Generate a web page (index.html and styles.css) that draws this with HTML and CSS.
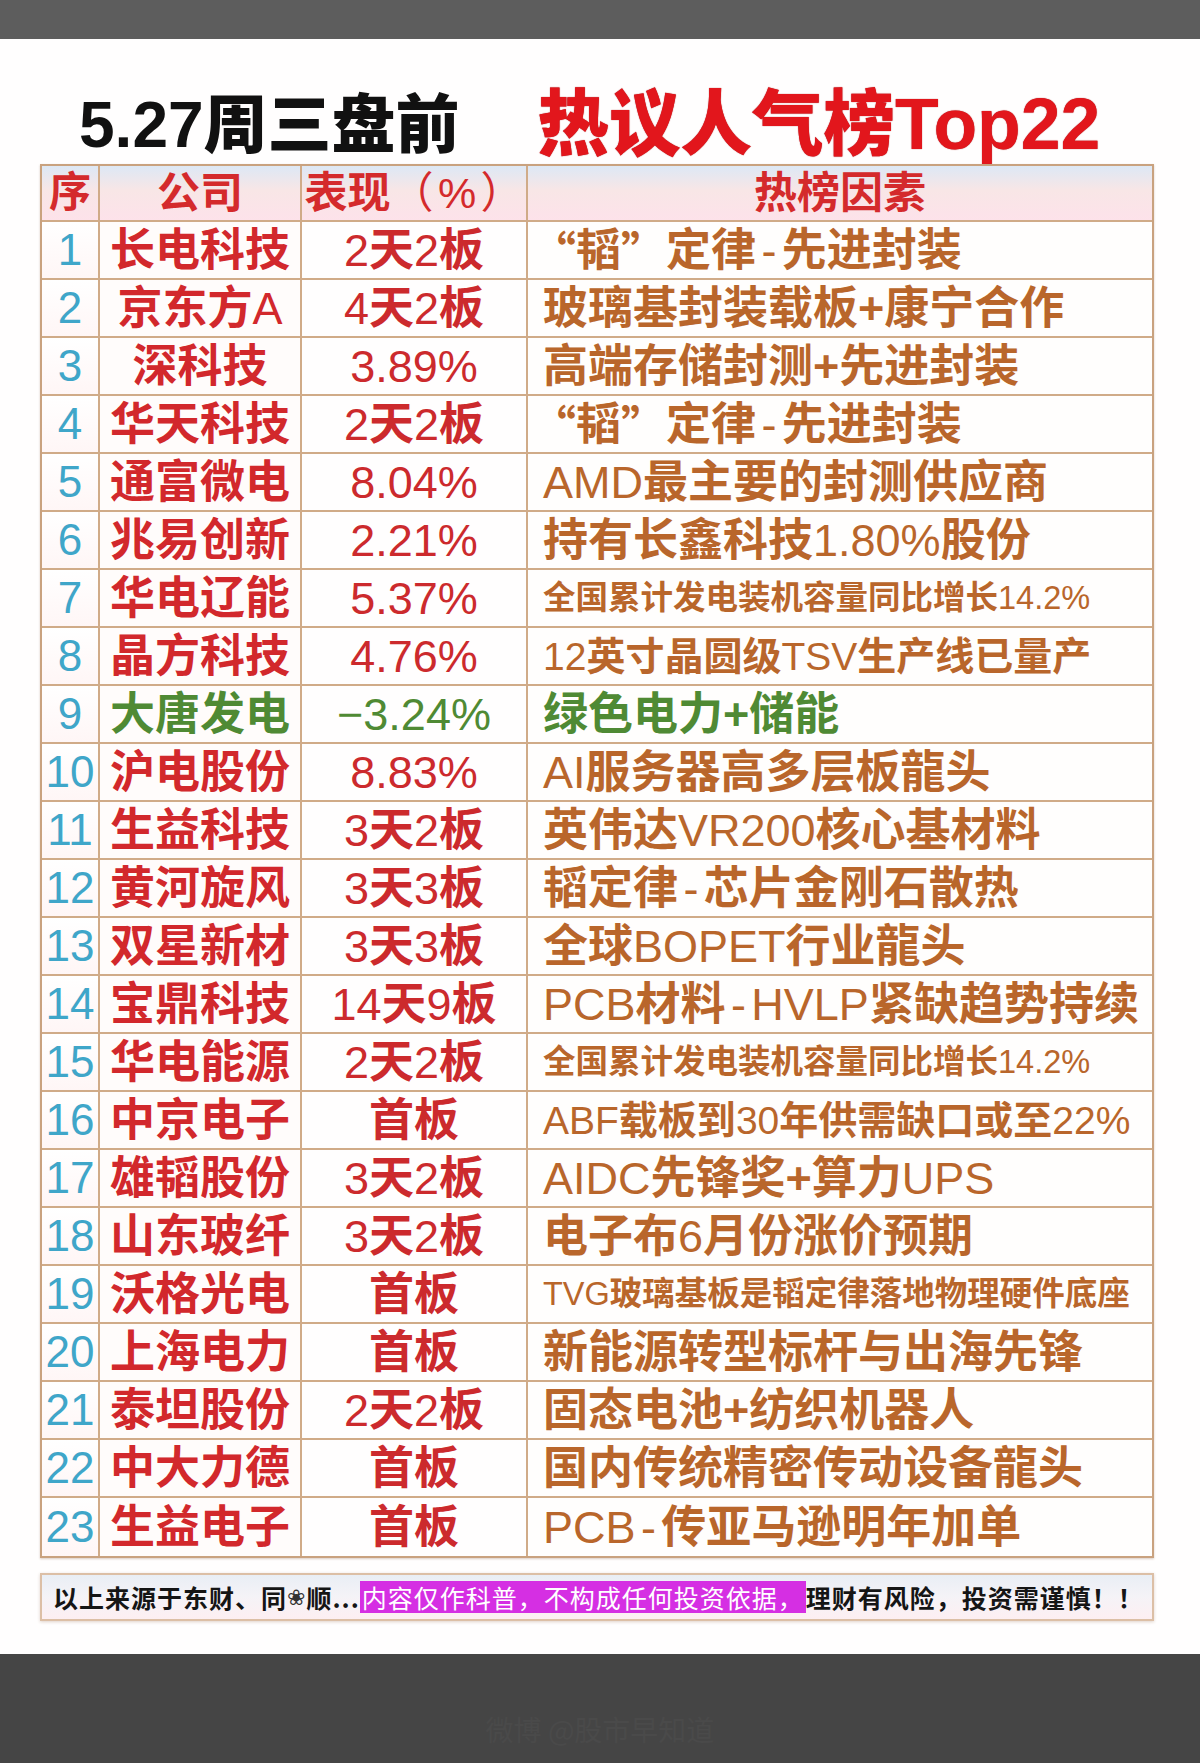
FILE: index.html
```html
<!DOCTYPE html>
<html lang="zh-CN">
<head>
<meta charset="utf-8">
<title>5.27周三盘前 热议人气榜Top22</title>
<link rel="stylesheet" href="styles.css">
</head>
<body>
<div class="topbar"></div>
<main class="sheet">
  <header class="title">
    <h1 class="t-date"><span class="lb">5.27</span>周三盘前</h1>
    <h2 class="t-hot">热议人气榜<span class="lb">Top22</span></h2>
  </header>

  <section class="board">
    <div class="c hd">序</div>
    <div class="c hd">公司</div>
    <div class="c hd">表现<span class="l">（<span class="pct">%</span>）</span></div>
    <div class="c hd">热榜因素</div>

    <div class="c no">1</div><div class="c co">长电科技</div><div class="c pf"><span class="l">2</span>天<span class="l">2</span>板</div><div class="c fx quoted"><span class="qo">“</span>韬<span class="qc">”</span>定律<span class="l dash">-</span>先进封装</div>
    <div class="c no">2</div><div class="c co">京东方<span class="l">A</span></div><div class="c pf"><span class="l">4</span>天<span class="l">2</span>板</div><div class="c fx">玻璃基封装载板+康宁合作</div>
    <div class="c no">3</div><div class="c co">深科技</div><div class="c pf"><span class="l">3.89%</span></div><div class="c fx">高端存储封测+先进封装</div>
    <div class="c no">4</div><div class="c co">华天科技</div><div class="c pf"><span class="l">2</span>天<span class="l">2</span>板</div><div class="c fx quoted"><span class="qo">“</span>韬<span class="qc">”</span>定律<span class="l dash">-</span>先进封装</div>
    <div class="c no">5</div><div class="c co">通富微电</div><div class="c pf"><span class="l">8.04%</span></div><div class="c fx"><span class="l">AMD</span>最主要的封测供应商</div>
    <div class="c no">6</div><div class="c co">兆易创新</div><div class="c pf"><span class="l">2.21%</span></div><div class="c fx">持有长鑫科技<span class="l">1.80%</span>股份</div>
    <div class="c no">7</div><div class="c co">华电辽能</div><div class="c pf"><span class="l">5.37%</span></div><div class="c fx sm">全国累计发电装机容量同比增长<span class="l">14.2%</span></div>
    <div class="c no">8</div><div class="c co">晶方科技</div><div class="c pf"><span class="l">4.76%</span></div><div class="c fx md"><span class="l">12</span>英寸晶圆级<span class="l">TSV</span>生产线已量产</div>
    <div class="c no">9</div><div class="c co green">大唐发电</div><div class="c pf green"><span class="l">−3.24%</span></div><div class="c fx green">绿色电力+储能</div>
    <div class="c no">10</div><div class="c co">沪电股份</div><div class="c pf"><span class="l">8.83%</span></div><div class="c fx"><span class="l">AI</span>服务器高多层板龍头</div>
    <div class="c no">11</div><div class="c co">生益科技</div><div class="c pf"><span class="l">3</span>天<span class="l">2</span>板</div><div class="c fx">英伟达<span class="l">VR200</span>核心基材料</div>
    <div class="c no">12</div><div class="c co">黄河旋风</div><div class="c pf"><span class="l">3</span>天<span class="l">3</span>板</div><div class="c fx">韬定律<span class="l dash">-</span>芯片金刚石散热</div>
    <div class="c no">13</div><div class="c co">双星新材</div><div class="c pf"><span class="l">3</span>天<span class="l">3</span>板</div><div class="c fx">全球<span class="l">BOPET</span>行业龍头</div>
    <div class="c no">14</div><div class="c co">宝鼎科技</div><div class="c pf"><span class="l">14</span>天<span class="l">9</span>板</div><div class="c fx"><span class="l">PCB</span>材料<span class="l dash">-</span><span class="l">HVLP</span>紧缺趋势持续</div>
    <div class="c no">15</div><div class="c co">华电能源</div><div class="c pf"><span class="l">2</span>天<span class="l">2</span>板</div><div class="c fx sm">全国累计发电装机容量同比增长<span class="l">14.2%</span></div>
    <div class="c no">16</div><div class="c co">中京电子</div><div class="c pf">首板</div><div class="c fx md"><span class="l">ABF</span>载板到<span class="l">30</span>年供需缺口或至<span class="l">22%</span></div>
    <div class="c no">17</div><div class="c co">雄韬股份</div><div class="c pf"><span class="l">3</span>天<span class="l">2</span>板</div><div class="c fx"><span class="l">AIDC</span>先锋奖+算力<span class="l">UPS</span></div>
    <div class="c no">18</div><div class="c co">山东玻纤</div><div class="c pf"><span class="l">3</span>天<span class="l">2</span>板</div><div class="c fx">电子布<span class="l">6</span>月份涨价预期</div>
    <div class="c no">19</div><div class="c co">沃格光电</div><div class="c pf">首板</div><div class="c fx sm"><span class="l">TVG</span>玻璃基板是韬定律落地物理硬件底座</div>
    <div class="c no">20</div><div class="c co">上海电力</div><div class="c pf">首板</div><div class="c fx">新能源转型标杆与出海先锋</div>
    <div class="c no">21</div><div class="c co">泰坦股份</div><div class="c pf"><span class="l">2</span>天<span class="l">2</span>板</div><div class="c fx">固态电池+纺织机器人</div>
    <div class="c no">22</div><div class="c co">中大力德</div><div class="c pf">首板</div><div class="c fx">国内传统精密传动设备龍头</div>
    <div class="c no">23</div><div class="c co">生益电子</div><div class="c pf">首板</div><div class="c fx"><span class="l">PCB</span><span class="l dash">-</span>传亚马逊明年加单</div>
  </section>

  <footer class="note">以上来源于东财、同<span class="flower">❀</span>顺...<mark class="warn">内容仅作科普，不构成任何投资依据，</mark>理财有风险，投资需谨慎！！</footer>
</main>
<div class="bottombar"><span class="wm">微博 @股市早知道</span></div>
</body>
</html>
```

FILE: styles.css
```css
* { box-sizing: border-box; }

html, body {
  margin: 0;
  padding: 0;
}

body {
  width: 1200px;
  height: 1763px;
  background: #ffffff;
  font-family: "Liberation Sans", "Noto Sans CJK SC", sans-serif;
  overflow: hidden;
}

.topbar {
  height: 39px;
  background: #5d5d5d;
}

.sheet {
  height: 1615px;
  background: #fffefe;
  padding: 0 46px 0 40px;
  display: flex;
  flex-direction: column;
}

/* ---------- title ---------- */
.title {
  height: 125px;
  padding: 46px 0 0 39px;
  display: flex;
  align-items: center;
  gap: 78px;
}

.title h1, .title h2 {
  margin: 0;
  line-height: 1;
  font-family: "Liberation Sans", "Noto Sans CJK SC", sans-serif;
  font-weight: 900;
  white-space: nowrap;
}

.t-date {
  font-size: 64px;
  color: #111111;
}

.t-hot {
  font-size: 71.5px;
  color: #e2161c;
  text-shadow: 0 0 1px #9a0c10;
}

.lb { font-weight: 700; }

/* ---------- board ---------- */
.board {
  display: grid;
  grid-template-columns: 58px 202px 226px 624px;
  grid-auto-rows: 58px;
  grid-template-rows: 56px;
  border: 2px solid #c9a27f;
  background: #fffcfa;
  box-shadow: 0 1px 2px rgba(150, 110, 80, 0.35);
}

.c {
  display: flex;
  align-items: center;
  justify-content: center;
  border-right: 2px solid #d0ab88;
  border-bottom: 2px solid #d0ab88;
  font-weight: 700;
  font-size: 45px;
  line-height: 1;
  white-space: nowrap;
  overflow: hidden;
  color: #d2282c;
}

.c:nth-child(4n) { border-right: none; }
.c:nth-last-child(-n+4) { border-bottom: none; }

.l { font-weight: 400; }
.dash { padding: 0 0.12em; }

.qo, .qc {
  font-family: "Noto Sans CJK SC", sans-serif;
  font-weight: 700;
}

.hd {
  font-size: 43px;
  color: #d42a2c;
  background: linear-gradient(180deg, #dde8f5 0%, #f8e6e6 45%, #fde2ea 100%);
}

.hd:first-child { font-size: 42px; }

.pct { padding: 0 0.1em; }

.no {
  font-weight: 400;
  font-size: 44px;
  color: #3fa6c9;
  background: linear-gradient(180deg, #ffffff 0%, #fff6f6 100%);
}

.co { background: #fffcfb; }

.pf { color: #cc2a2d; background: #fffefe; }

.fx {
  justify-content: flex-start;
  padding-left: 15px;
  color: #b9662b;
  background: #fffefd;
}

.fx.quoted { padding-left: 3px; }

.fx.sm { font-size: 32.5px; }
.fx.md { font-size: 39px; }

.green { color: #4f8a34; }
.fx.green { color: #4f8a34; }

/* ---------- footer note ---------- */
.note {
  margin-top: 15px;
  height: 48px;
  width: 1114px;
  border: 2px solid #dcbfa6;
  background: linear-gradient(180deg, #e9eef5 0%, #f5f3f7 50%, #fdeff2 100%);
  box-shadow: 0 1px 3px rgba(150, 110, 80, 0.3);
  display: flex;
  align-items: center;
  padding-left: 11px;
  font-family: "Noto Sans CJK SC", sans-serif;
  font-weight: 700;
  font-size: 25px;
  letter-spacing: 1px;
  color: #151515;
  white-space: nowrap;
}

.flower {
  font-family: "DejaVu Sans", sans-serif;
  font-weight: 400;
  font-size: 22px;
  color: #333;
}

.warn {
  background: #d52fe3;
  color: #ffffff;
  font-weight: 400;
  line-height: 32px;
  padding: 0 2px;
}

/* ---------- bottom ---------- */
.bottombar {
  height: 109px;
  background: #454545;
  display: flex;
  justify-content: center;
  align-items: flex-end;
  padding: 0 0 14px 0;
}

.wm {
  font-family: "Noto Sans CJK SC", sans-serif;
  font-size: 28px;
  color: #4a4a4a;
}
```
